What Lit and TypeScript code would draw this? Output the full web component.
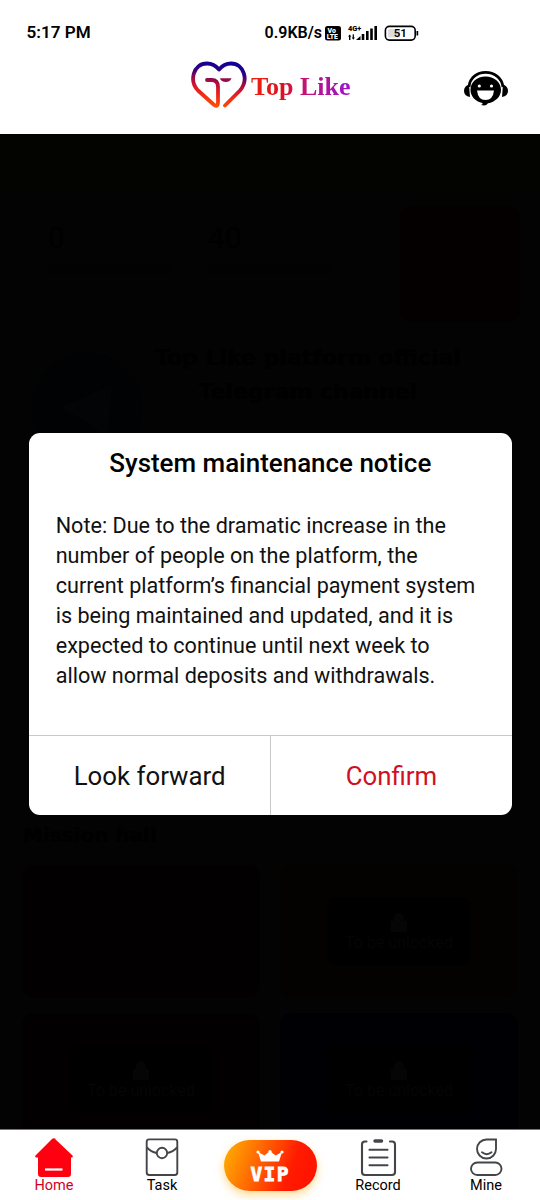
import { LitElement, html, css, svg } from "lit";
import { customElement } from "lit/decorators.js";

const home = svg`<path d="M54 9 L72.5 26.5 Q73.5 28 72 28.5 H71 V45 Q71 48 68 48 H41 Q38 48 38 45 V28.5 H36 Q34.5 28 35.5 26.5 L51.5 10.5 Q54 8 56.5 10.5Z" fill="#ff0010"/><path d="M45 40.5H62.5" stroke="#fff" stroke-width="2.2"/>`;
const task = svg`<g fill="none" stroke="#444548" stroke-width="1.9"><rect x="38.7" y="10.4" width="30.6" height="35.6" rx="2.4"/><circle cx="54" cy="24" r="5.2"/><path d="M39 18.5Q43 23 48.7 24M69 18.5Q65 23 59.3 24"/></g>`;
const record = svg`<g fill="none" stroke="#444548" stroke-width="2.1" stroke-linecap="round"><path d="M42.5 12.5H41Q38 12.5 38 15.5V43Q38 46 41 46H68Q71 46 71 43V15.5Q71 12.5 68 12.5H66"/><path d="M45.5 20.8H63.5M45.5 28.5H63.5M45.5 36.2H63.5"/><path d="M51 12H57.5" stroke-width="3.5"/></g>`;
const mine = svg`<g fill="none" stroke="#444548" stroke-width="1.9"><path d="M54.5 10.5H64V20A9.5 9.5 0 1 1 54.5 10.5Z"/><rect x="39" y="33.5" width="30.5" height="12.5" rx="6.2"/><path d="M50 23.3Q54.8 27 59.5 23.3" stroke-linecap="round"/></g>`;
const lock = svg`<path d="M5 10V7a5 5 0 0 1 10 0v3h3v11H2V10z" fill="#050505"/>`;

@customElement("app-root")
export class AppRoot extends LitElement {
  static styles = css`
    :host { display: block; width: 540px; height: 1200px; font-family: Roboto, "Noto Sans", sans-serif; color: #000; }
    * { box-sizing: border-box; }
    svg { display: block; }
    .app { display: grid; grid-template-rows: 134px 995px 71px; height: 1200px; background: #fff; overflow: hidden; }
    .status { display: flex; justify-content: space-between; height: 52px; padding: 22px 121px 0 26.5px; font-size: 16px; line-height: 22px; font-weight: 600; }
    .clock { font-size: 17.1px; line-height: 20px; }
    .right { display: flex; }
    .signals { margin-left: 2px; }
    .brand { display: flex; height: 70px; padding-left: 189px; }
    .heart { margin-top: 3px; }
    .name { width: 152px; padding-top: 18px; font: 700 26px/34px "Liberation Serif", serif; white-space: nowrap; margin-left: 2px; }
    .name span { background: linear-gradient(90deg, #ee2310, #dd1020 32%, #c41370 52%, #9c12d0); background-clip: text; -webkit-background-clip: text; color: transparent; }
    .support { margin-left: 58px; margin-top: 14px; }
    .stage { display: grid; overflow: hidden; background: #020302; }
    .page, .mask { grid-area: 1 / 1; min-width: 0; min-height: 0; }
    .page { color: #000; }
    .ticker { height: 60px; background: #030300; }
    .stats { display: flex; height: 142px; padding: 12px 20px 0 48px; }
    .stat { width: 160px; }
    .stat:nth-child(2) { width: 192px; }
    .stat b { display: block; height: 58px; font: 30px/64px Roboto, sans-serif; }
    .stat i { display: block; width: 124px; height: 10px; border-radius: 5px; background: #010201; }
    .red { width: 120px; height: 116px; border-radius: 12px; background: #040000; }
    .tele { display: flex; height: 155px; padding: 17px 20px 0 32px; font: 700 22px/34px "DejaVu Sans", sans-serif; text-align: center; }
    .plane { flex: none; width: 110px; height: 110px; border-radius: 50%; background: #000204; }
    .tele p { margin: -12px 0 0; width: 332px; }
    .gap { height: 322px; }
    .hall { height: 52px; padding-left: 23px; font: 700 20px/44px "DejaVu Sans", sans-serif; }
    .cards { display: grid; grid-template-columns: 238px 238px; grid-auto-rows: 132px; gap: 16px 20px; padding-left: 22px; }
    .card { border-radius: 12px; background: #030001; display: flex; align-items: center; justify-content: center; }
    .card.gold { background: #030200; }
    .card.blue { background: #000004; }
    .locked { display: flex; flex-direction: column; align-items: center; justify-content: center; width: 144px; height: 68px; border-radius: 9px; background: #000; color: #050505; font-size: 16px; }
    .mask { display: flex; flex-direction: column; padding: 299.4px 28.5px 0 29px; }
    .dialog { display: flex; flex-direction: column; height: 382px; background: #fff; border-radius: 11px; overflow: hidden; }
    h2 { margin: 0; padding-top: 14px; font-size: 25.95px; line-height: 32px; font-weight: 500; text-align: center; }
    .note { margin: 32px 0 0 26.7px; font-size: 21.6px; line-height: 30px; color: #111; white-space: nowrap; }
    .actions { display: grid; grid-template-columns: 1fr 1fr; height: 80.4px; margin-top: auto; border-top: 1px solid #c9c9c9; }
    button { border: 0; padding: 0; background: none; font: 25.8px/32px Roboto, sans-serif; color: #111; }
    button + button { border-left: 1px solid #c9c9c9; color: #d1101f; }
    .nav { display: grid; grid-template-columns: repeat(5, 108px); border-top: 1px solid #777; }
    .tab { font-size: 14.5px; line-height: 18px; text-align: center; }
    .tab svg { margin-top: -1px; }
    .active { color: #d4001f; }
    .vip { margin: 10px 7px 0 7.5px; height: 51px; border-radius: 26px; background: linear-gradient(110deg, #ffad00 3%, #ff6a00 35%, #ff1b00 70%, #ff1000); box-shadow: 0 4px 9px #ffc34b99; color: #fff; text-align: center; font: 700 19.5px/25px "DejaVu Sans Mono", monospace; letter-spacing: 1.5px; padding-top: 10px; -webkit-text-stroke: .8px #fff; }
    .vip svg { margin: 0 auto; }
  `;
  tab(label: string, icon: unknown, active = false) {
    return html`<div class="tab ${active ? "active" : ""}"><svg width="108" height="48" viewBox="0 0 108 48">${icon}</svg>${label}</div>`;
  }
  locked() {
    return html`<div class="locked"><svg width="20" height="22">${lock}</svg>To be unlocked</div>`;
  }
  render() {
    return html`<div class="app">
      <header>
        <div class="status"><span class="clock">5:17 PM</span><div class="right"><span class="speed">0.9KB/s</span>
          <svg class="signals" width="95" height="22" viewBox="324 21 95 22">
            <rect x="325" y="25" width="16" height="14.5" rx="2.5"/>
            <g font-family="Roboto, sans-serif" font-weight="900"><text x="327.5" y="31.8" font-size="7" fill="#fff">Vo</text><text x="326.7" y="38.3" font-size="6.8" fill="#fff">LTE</text><text x="348" y="29.5" font-size="7.4">4G+</text></g>
            <path d="M348 35.5l1.7-2 1.7 2h-1v3.5h-1.4v-3.5zM351.7 36.5h1v-3.2h1.2v3.2h1l-1.6 2.2zM356 39l4.5-4v4zM361.7 39v-6h2.6v6zM366 39v-9h2.6v9zM370.2 39v-11.5h2.6v11.5zM374.4 39v-14h2.6v14z"/>
            <rect x="385.4" y="25.4" width="29.8" height="13.7" rx="4" fill="#fff" stroke="#000" stroke-width="1.6"/><rect x="388" y="28" width="12" height="8.6" rx="1.5" fill="#ddd"/><path d="M416.5 30h1.7v4.5h-1.7z"/>
            <text x="400.3" y="36.2" text-anchor="middle" font-family="Roboto, sans-serif" font-size="11.5" font-weight="600">51</text>
          </svg></div></div>
        <div class="brand">
          <svg class="heart" width="60" height="58" viewBox="189 55 60 58"><defs>
            <linearGradient id="h" gradientUnits="userSpaceOnUse" x1="222" y1="63" x2="216" y2="107"><stop offset="0" stop-color="#130096"/><stop offset=".22" stop-color="#300080"/><stop offset=".42" stop-color="#a00b43"/><stop offset=".65" stop-color="#e51c22"/><stop offset="1" stop-color="#ff5000"/></linearGradient></defs>
            <path d="M207 80H211.5Q218 80 218 87V102Q218 108.5 213 104L198 90.5C189 81 193 63.5 207 63.5Q214 63.5 219 69.5Q224 63.5 231 63.5C244 63.5 249 80 240 90.5L225 105.5" fill="none" stroke="url(#h)" stroke-width="3.8" stroke-linecap="round" stroke-linejoin="round"/><path d="M220 78.2H231.5Q230 82 226 82Q221 82 220 78.2Z" fill="#911049"/></svg>
          <div class="name"><span>Top Like</span></div>
          <svg class="support" width="50" height="42" viewBox="461 66 50 42"><path d="M469 87C470 67.5 501 67.5 503 87" fill="none" stroke="#000" stroke-width="2.8"/><path d="M469 84.5Q464 86 464 91Q464 96 470 97ZM503 84.5Q508 86 508 91Q508 96 502 97Z"/><path d="M485.5 76.5C494 76.5 501 82 501 90C501 97 495 102 488 103.3Q486 106.5 481 105Q483 104.3 482.5 103C475 101.5 470.5 96 470.5 90C470.5 82 477 76.5 485.5 76.5Z"/><path d="M477 90.5H494Q493 100 485.5 100Q478 100 477 90.5Z" fill="#fff"/><circle cx="479.3" cy="86" r="1.6" fill="#fff"/><circle cx="491.5" cy="86" r="1.6" fill="#fff"/></svg>
        </div>
      </header>
      <main class="stage">
        <div class="page">
          <div class="ticker"></div>
          <div class="stats"><div class="stat"><b>0</b><i></i></div><div class="stat"><b>40</b><i></i></div><div class="red"></div></div>
          <div class="tele"><div class="plane"><svg width="110" height="110"><path d="M28 54L80 32L76 86L56 70Z" fill="#030405"/></svg></div><p>Top Like platform official Telegram channel</p></div>
          <div class="gap"></div><div class="hall">Mission hall</div>
          <div class="cards"><div class="card"></div><div class="card gold">${this.locked()}</div><div class="card">${this.locked()}</div><div class="card blue">${this.locked()}</div></div>
        </div>
        <div class="mask"><section class="dialog"><h2><span>System maintenance notice</span></h2>
          <p class="note">Note: Due to the dramatic increase in the<br>number of people on the platform, the<br>current platform’s financial payment system<br>is being maintained and updated, and it is<br>expected to continue until next week to<br>allow normal deposits and withdrawals.</p>
          <div class="actions"><button>Look forward</button><button>Confirm</button></div></section></div>
      </main>
      <nav class="nav">${this.tab("Home", home, true)}${this.tab("Task", task)}
        <div class="vip"><svg width="28" height="12" viewBox="0 0 28 12"><path d="M2 2L8.5 5.5L14 1L19.5 5.5L26 2L23 11.5H5Z" fill="#fff"/><g fill="#fff"><circle cx="2" cy="2" r="1.6"/><circle cx="14" cy="1.6" r="1.6"/><circle cx="26" cy="2" r="1.6"/></g></svg>VIP</div>
        ${this.tab("Record", record)}${this.tab("Mine", mine)}</nav>
    </div>`;
  }
}
